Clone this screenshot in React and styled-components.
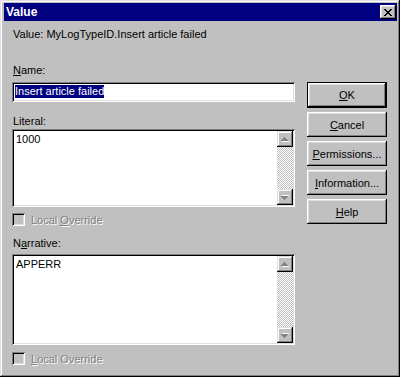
import React from 'react';
import styled, { createGlobalStyle } from 'styled-components';

const GlobalStyle = createGlobalStyle`
  * { box-sizing: border-box; }
  body {
    margin: 0;
    background: #c0c0c0;
    font-family: "Liberation Sans", Arial, sans-serif;
  }
`;

const Window = styled.div`
  width: 400px;
  height: 377px;
  background: #c0c0c0;
  padding: 3px 3px 3px 4px;
  box-shadow: inset -1px -1px #000, inset 1px 1px #dfdfdf,
    inset -2px -2px #808080, inset 2px 2px #fff;
  font-size: 11px;
  color: #000;
`;

const TitleBar = styled.div`
  height: 18px;
  background: #000080;
  display: flex;
  align-items: center;
  justify-content: space-between;
  padding: 0 1px 0 2px;
`;

const TitleText = styled.span`
  color: #fff;
  font-weight: bold;
  font-size: 12px;
  line-height: 18px;
`;

const CloseButton = styled.div`
  width: 16px;
  height: 14px;
  background: #c0c0c0;
  display: flex;
  align-items: center;
  justify-content: center;
  box-shadow: inset -1px -1px #000, inset 1px 1px #fff,
    inset -2px -2px #808080, inset 2px 2px #dfdfdf;
`;

const InfoLine = styled.div`
  margin-top: 7px;
  padding-left: 9px;
  height: 13px;
  line-height: 13px;
`;

const Main = styled.div`
  display: flex;
  margin-top: 23px;
  padding-left: 8px;
`;

const LeftCol = styled.div`
  width: 283px;
  display: flex;
  flex-direction: column;
`;

const RightCol = styled.div`
  width: 80px;
  margin-left: 12px;
  margin-top: 18px;
  display: flex;
  flex-direction: column;
`;

const Label = styled.div`
  height: 13px;
  line-height: 13px;
  margin-top: ${(p) => p.$mt || 0}px;
  padding-left: 1px;
`;

const Sunken = styled.div`
  background: #fff;
  box-shadow: inset 1px 1px #808080, inset -1px -1px #fff,
    inset 2px 2px #000, inset -2px -2px #dfdfdf;
  padding: 2px;
`;

const TextInput = styled(Sunken)`
  height: 20px;
  margin-top: ${(p) => p.$mt || 0}px;
  padding: 3px 2px 2px 3px;
  line-height: 13px;
`;

const Selected = styled.span`
  background: #000080;
  color: #fff;
  display: inline-block;
  height: 13px;
`;

const TextArea = styled(Sunken)`
  height: ${(p) => p.$h}px;
  margin-top: ${(p) => p.$mt || 0}px;
  display: flex;
`;

const AreaText = styled.div`
  flex: 1;
  padding: 2px 2px 0 2px;
  line-height: 13px;
`;

const ScrollBar = styled.div`
  width: 16px;
  display: flex;
  flex-direction: column;
`;

const ScrollArrow = styled.div`
  width: 16px;
  height: 16px;
  background: #c0c0c0;
  display: flex;
  align-items: center;
  justify-content: center;
  box-shadow: inset -1px -1px #000, inset 1px 1px #dfdfdf,
    inset -2px -2px #808080, inset 2px 2px #fff;
`;

const Track = styled.div`
  flex: 1;
  background-image: conic-gradient(#fff 25%, #c0c0c0 0 50%, #fff 0 75%, #c0c0c0 0);
  background-size: 2px 2px;
`;

const CheckRow = styled.div`
  display: flex;
  align-items: center;
  height: 13px;
  margin-top: ${(p) => p.$mt || 0}px;
  color: #808080;
  text-shadow: 1px 1px #fff;
`;

const CheckBox = styled.div`
  width: 13px;
  height: 13px;
  background: #c0c0c0;
  margin-right: 6px;
  box-shadow: inset 1px 1px #808080, inset -1px -1px #fff,
    inset 2px 2px #000, inset -2px -2px #dfdfdf;
`;

const Button = styled.div`
  height: ${(p) => (p.$default ? 26 : 25)}px;
  margin-bottom: 4px;
  background: #c0c0c0;
  display: flex;
  align-items: center;
  justify-content: center;
  border: ${(p) => (p.$default ? '1px solid #000' : 'none')};
  box-shadow: inset -1px -1px #000, inset 1px 1px #fff,
    inset -2px -2px #808080, inset 2px 2px #dfdfdf;
`;

const Key = styled.u`
  text-decoration: underline;
`;

const CloseGlyph = () => (
  <svg width="8" height="7" viewBox="0 0 8 7" shapeRendering="crispEdges">
    <path
      d="M0 0h2v1h-2zM6 0h2v1h-2zM1 1h2v1h-2zM5 1h2v1h-2zM2 2h4v1h-4zM3 3h2v1h-2zM2 4h4v1h-4zM1 5h2v1h-2zM5 5h2v1h-2zM0 6h2v1h-2zM6 6h2v1h-2z"
      fill="#000"
    />
  </svg>
);

const Arrow = ({ down }) => (
  <svg width="8" height="5" viewBox="0 0 8 5" shapeRendering="crispEdges">
    <g transform={down ? 'translate(0,5) scale(1,-1)' : undefined}>
      <path d="M4 1h1v1h1v1h1v1h1v1h-7v-1h1v-1h1v-1h1z" fill="#fff" />
      <path d="M3 0h1v1h1v1h1v1h1v1h-7v-1h1v-1h1v-1h1z" fill="#808080" />
    </g>
  </svg>
);

const Area = ({ h, mt, text }) => (
  <TextArea $h={h} $mt={mt}>
    <AreaText>{text}</AreaText>
    <ScrollBar>
      <ScrollArrow>
        <Arrow />
      </ScrollArrow>
      <Track />
      <ScrollArrow>
        <Arrow down />
      </ScrollArrow>
    </ScrollBar>
  </TextArea>
);

const App = () => {
  return (
    <Window>
      <GlobalStyle />
      <TitleBar>
        <TitleText>Value</TitleText>
        <CloseButton>
          <CloseGlyph />
        </CloseButton>
      </TitleBar>
      <InfoLine>Value: MyLogTypeID.Insert article failed</InfoLine>
      <Main>
        <LeftCol>
          <Label>
            <Key>N</Key>ame:
          </Label>
          <TextInput $mt={5}>
            <Selected>Insert article failed</Selected>
          </TextInput>
          <Label $mt={13}>Literal:</Label>
          <Area h={78} mt={1} text="1000" />
          <CheckRow $mt={6}>
            <CheckBox />
            <span>
              Local <Key>O</Key>verride
            </span>
          </CheckRow>
          <Label $mt={11}>
            N<Key>a</Key>rrative:
          </Label>
          <Area h={91} mt={4} text="APPERR" />
          <CheckRow $mt={7}>
            <CheckBox />
            <span>
              <Key>L</Key>ocal Override
            </span>
          </CheckRow>
        </LeftCol>
        <RightCol>
          <Button $default>
            <span>
              <Key>O</Key>K
            </span>
          </Button>
          <Button>
            <span>
              <Key>C</Key>ancel
            </span>
          </Button>
          <Button>
            <span>
              <Key>P</Key>ermissions...
            </span>
          </Button>
          <Button>
            <span>
              <Key>I</Key>nformation...
            </span>
          </Button>
          <Button>
            <span>
              <Key>H</Key>elp
            </span>
          </Button>
        </RightCol>
      </Main>
    </Window>
  );
};

export default App;
